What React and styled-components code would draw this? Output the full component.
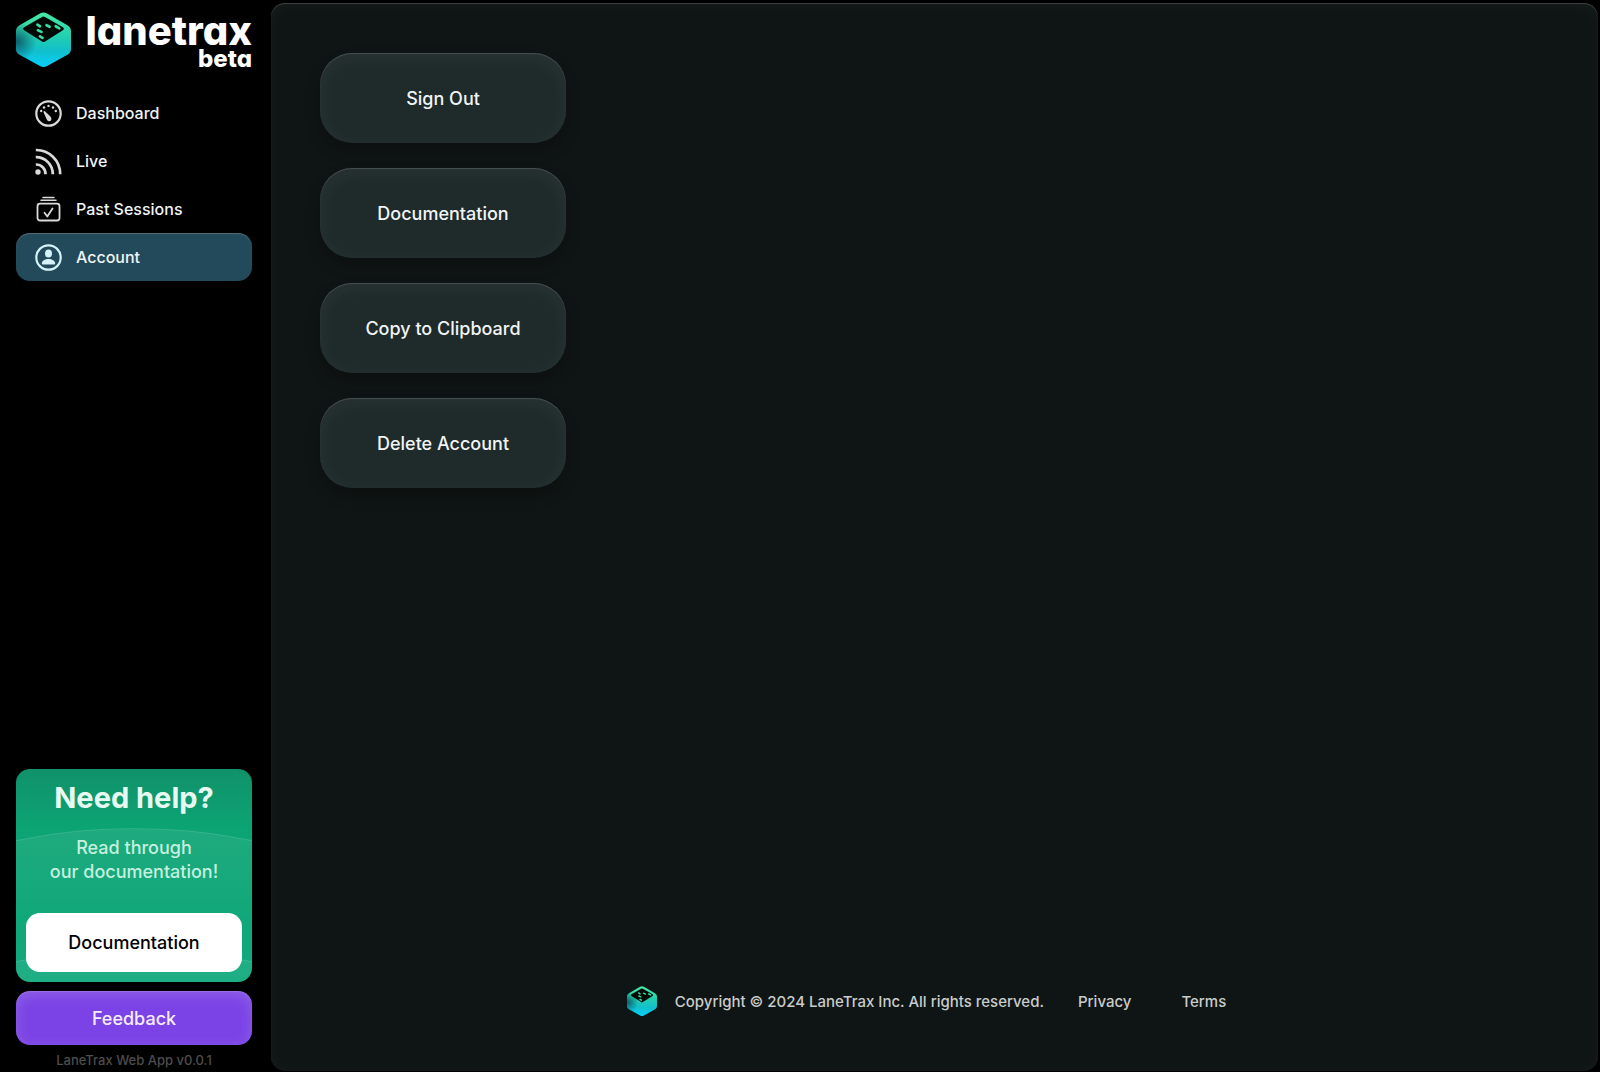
import React from "react"
import styled, { createGlobalStyle } from "styled-components"

const GlobalStyle = createGlobalStyle`
  *,
  *::before,
  *::after {
    box-sizing: border-box;
  }

  body {
    margin: 0;
    background: #000;
    color: #f1f4f4;
    font-family: Inter, "Liberation Sans", sans-serif;
    font-size: 16px;
    font-weight: 500;
  }

  a {
    color: inherit;
    text-decoration: none;
  }

  button {
    border: 0;
    color: inherit;
    font: inherit;
    cursor: pointer;
  }
`

const Page = styled.div`
  display: flex;
  min-height: 100vh;
`

const Sidebar = styled.aside`
  flex: 0 0 271px;
  display: flex;
  flex-direction: column;
  padding: 12px 19px 4px 16px;
`

const Brand = styled.a`
  display: flex;
  justify-content: space-between;
  align-items: flex-start;
  height: 57px;
  color: #fff;
`

const Wordmark = styled.span`
  display: flex;
  flex-direction: column;
  align-items: flex-end;
  font-size: 40px;
  font-weight: 800;
  line-height: 38px;
  font-feature-settings: "cv11";
`

const Stage = styled.span`
  font-size: 24px;
  line-height: 18px;
`

const Nav = styled.nav`
  display: flex;
  flex-direction: column;
  margin-top: 20px;
`

const NavLink = styled.a`
  display: flex;
  align-items: center;
  gap: 14px;
  height: 48px;
  padding: 0 19px;
  border-radius: 14px;
  background: ${props => (props.$active ? "#234a5a" : "transparent")};
  box-shadow: ${props =>
    props.$active ? "inset 0 1px 1px rgba(255, 255, 255, 0.2)" : "none"};

  svg {
    flex: none;
    color: ${props => (props.$active ? "#d3f3f8" : "#dadada")};
  }
`

const SidebarBottom = styled.div`
  display: flex;
  flex-direction: column;
  gap: 9px;
  margin-top: auto;
`

const HelpCard = styled.section`
  position: relative;
  overflow: hidden;
  padding: 10px;
  border-radius: 14px;
  background: linear-gradient(#11916a, #0ca473 60px, #0ca87b);
  text-align: center;
`

const Arc = styled.span`
  position: absolute;
  top: ${props => props.$top};
  left: 50%;
  width: 1160px;
  height: 1160px;
  border: 1px solid rgba(255, 255, 255, 0.1);
  border-radius: 50%;
  background: linear-gradient(
    rgba(255, 255, 255, 0.08),
    rgba(255, 255, 255, 0.02) 90px
  );
  transform: translateX(-50%);
`

const HelpContent = styled.div`
  position: relative;
  display: flex;
  flex-direction: column;
`

const HelpTitle = styled.h2`
  margin: 0;
  color: #e6faf2;
  font-size: 29px;
  font-weight: 700;
  line-height: 38px;
`

const HelpText = styled.p`
  margin: 19px 0 29px;
  color: #c5f0df;
  font-size: 18px;
  line-height: 24px;
`

const HelpButton = styled.button`
  height: 59px;
  border-radius: 14px;
  background: #fff;
  color: #000;
  font-size: 18px;
`

const FeedbackButton = styled.button`
  height: 54px;
  border-radius: 14px;
  background: #7b43e5;
  box-shadow: inset 0 1px 1px rgba(255, 255, 255, 0.15),
    inset 0 4px 14px rgba(255, 255, 255, 0.16);
  color: #f5edff;
  font-size: 18px;
`

const Version = styled.small`
  margin-top: -2px;
  color: #4d4d4d;
  font-size: 13px;
  line-height: 16px;
  text-align: center;
`

const Main = styled.main`
  flex: 1;
  display: flex;
  flex-direction: column;
  justify-content: space-between;
  margin: 3px 2px 1px 0;
  padding: 50px 49px 55px;
  border-radius: 14px;
  background: #0f1514;
  box-shadow: inset 0 1px 1px rgba(255, 255, 255, 0.18),
    inset 0 2px 16px rgba(255, 255, 255, 0.04);
`

const Actions = styled.div`
  display: flex;
  flex-direction: column;
  align-items: flex-start;
  gap: 25px;
`

const ActionButton = styled.button`
  width: 246px;
  height: 90px;
  border-radius: 32px;
  background: #1f2a2a;
  box-shadow: inset 0 1px 1px rgba(255, 255, 255, 0.16),
    inset 0 4px 20px rgba(255, 255, 255, 0.05),
    0 8px 16px rgba(0, 0, 0, 0.2);
  font-size: 18px;
`

const Footer = styled.footer`
  display: flex;
  justify-content: center;
  align-items: center;
  gap: 18px;
  color: #c9cccb;
  font-size: 15px;
`

const FooterLink = styled.a`
  padding: 0 16px;
`

const Logo = ({ size, id }) => (
  <svg width={size} height={size} viewBox="0 0 54 54" aria-hidden="true">
    <defs>
      <linearGradient id={id} x1="0" y1="0" x2="0" y2="1">
        <stop offset="0" stopColor="#48eba2" />
        <stop offset="0.45" stopColor="#20cfb1" />
        <stop offset="0.7" stopColor="#12bfcb" />
        <stop offset="1" stopColor="#06d0fb" />
      </linearGradient>
      <radialGradient id={`${id}-shade`} cx="0.02" cy="0.53" r="0.36">
        <stop offset="0" stopColor="#083f56" stopOpacity="0.75" />
        <stop offset="1" stopColor="#083f56" stopOpacity="0" />
      </radialGradient>
    </defs>
    {[`url(#${id})`, `url(#${id}-shade)`].map(fill => (
      <path
        key={fill}
        fill={fill}
        d="M23.5 1.5Q27-.5 30.5 1.5L50.5 13Q54 15 54 19V36Q54 40 50.5 42L30.5 53Q27 55 23.5 53L3.5 42Q0 40 0 36V19Q0 15 3.5 13Z"
      />
    ))}
    <path
      fill="#020a07"
      d="M25.5 5Q27 4 28.5 5L46 15Q48 16.5 46 18L28.5 29Q27 30 25.5 29L8 18Q6 16.5 8 15Z"
    />
    <path
      stroke="#38dfa2"
      strokeWidth="2.6"
      strokeLinecap="round"
      d="M21 12.5L23.5 14M30 13L33 14.5M39 14L42.5 16M21.5 18L25 19.5M23.5 24L26 25.5"
    />
  </svg>
)

const GaugeIcon = () => (
  <svg width="27" height="27" viewBox="0 0 27 27" fill="none" aria-hidden="true">
    <circle cx="13.5" cy="13.5" r="12.2" stroke="currentColor" strokeWidth="2.2" />
    <g fill="currentColor">
      <circle cx="6.2" cy="11" r="1.2" />
      <circle cx="9" cy="7.5" r="1.2" />
      <circle cx="13.5" cy="5.9" r="1.2" />
      <circle cx="18" cy="7.5" r="1.2" />
      <circle cx="20.8" cy="11" r="1.2" />
      <path d="M8.6 12.4Q8.2 10.8 9.8 11.2L15 15.9Q17.2 18.6 16 20.5C14.6 21.9 12.6 21.4 11.8 19.5Z" />
    </g>
  </svg>
)

const FeedIcon = () => (
  <svg width="27" height="27" viewBox="0 0 27 27" fill="none" aria-hidden="true">
    <circle cx="3" cy="24" r="2.7" fill="currentColor" />
    <path
      stroke="currentColor"
      strokeWidth="2.7"
      d="M.8 16.5A9.5 9.5 0 0 1 10.5 26.3M.8 9.2A16.8 16.8 0 0 1 17.8 26.3M.8 2A24 24 0 0 1 25.2 26.3"
    />
  </svg>
)

const SessionsIcon = () => (
  <svg
    width="27"
    height="27"
    viewBox="0 0 27 27"
    fill="none"
    stroke="currentColor"
    strokeWidth="1.8"
    strokeLinecap="round"
    strokeLinejoin="round"
    aria-hidden="true"
  >
    <path strokeWidth="1.5" d="M8 1.5H19M6 4.3H21" />
    <rect x="2.5" y="7.7" width="22" height="16.8" rx="2.5" />
    <path d="M9.5 16.8L12.3 20.5L17.5 12.5" />
  </svg>
)

const UserIcon = () => (
  <svg width="27" height="27" viewBox="0 0 27 27" fill="none" aria-hidden="true">
    <circle cx="13.5" cy="13.5" r="12.2" stroke="currentColor" strokeWidth="2.2" />
    <ellipse cx="13.5" cy="9.6" rx="3.5" ry="4" fill="currentColor" />
    <path
      fill="currentColor"
      d="M6.8 19.5C7 16.5 10 15 13.5 15S20 16.5 20.2 19.5Q20.2 20.5 19.2 20.5H7.8Q6.8 20.5 6.8 19.5Z"
    />
  </svg>
)

const links = [
  { label: "Dashboard", icon: GaugeIcon },
  { label: "Live", icon: FeedIcon },
  { label: "Past Sessions", icon: SessionsIcon },
  { label: "Account", icon: UserIcon, active: true },
]

const actions = [
  "Sign Out",
  "Documentation",
  "Copy to Clipboard",
  "Delete Account",
]

const App = () => {
  return (
    <>
      <GlobalStyle />
      <Page>
        <Sidebar>
          <Brand href="#">
            <Logo size={55} id="brand" />
            <Wordmark>
              lanetrax
              <Stage>beta</Stage>
            </Wordmark>
          </Brand>
          <Nav>
            {links.map(({ label, icon: Icon, active }) => (
              <NavLink
                key={label}
                href="#"
                $active={active}
                aria-current={active ? "page" : undefined}
              >
                <Icon />
                {label}
              </NavLink>
            ))}
          </Nav>
          <SidebarBottom>
            <HelpCard>
              <Arc $top="59px" />
              <Arc $top="180px" />
              <HelpContent>
                <HelpTitle>Need help?</HelpTitle>
                <HelpText>
                  Read through
                  <br />
                  our documentation!
                </HelpText>
                <HelpButton type="button">Documentation</HelpButton>
              </HelpContent>
            </HelpCard>
            <FeedbackButton type="button">Feedback</FeedbackButton>
            <Version>LaneTrax Web App v0.0.1</Version>
          </SidebarBottom>
        </Sidebar>
        <Main>
          <Actions>
            {actions.map(label => (
              <ActionButton key={label} type="button">
                {label}
              </ActionButton>
            ))}
          </Actions>
          <Footer>
            <Logo size={30} id="footer" />
            <span>Copyright © 2024 LaneTrax Inc. All rights reserved.</span>
            <FooterLink href="#">Privacy</FooterLink>
            <FooterLink href="#">Terms</FooterLink>
          </Footer>
        </Main>
      </Page>
    </>
  )
}

export default App
